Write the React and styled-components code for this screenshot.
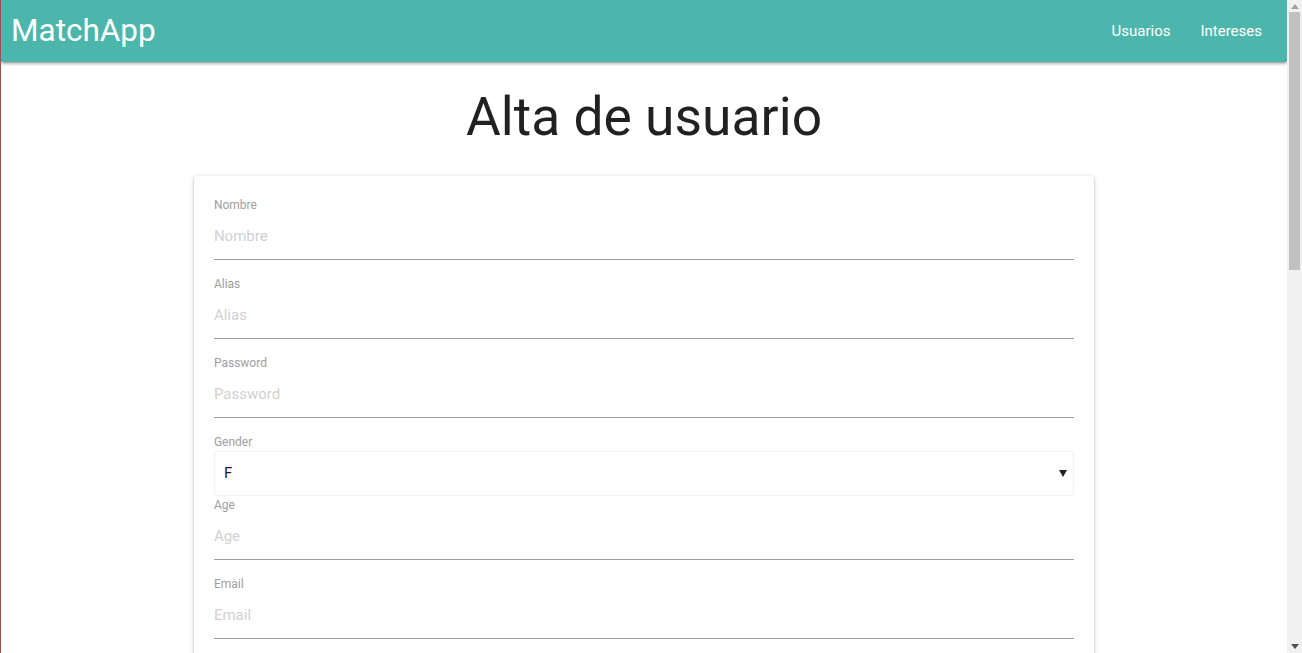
import React from "react";
import styled, { createGlobalStyle } from "styled-components";

const Global = createGlobalStyle`
  html { font-size: 15px; }
  html, body { margin: 0; height: 100%; overflow: hidden; }
  body {
    font-family: Roboto, "Noto Sans", Arial, sans-serif;
    color: rgba(0,0,0,0.87);
    background: #fff;
  }
  * { box-sizing: border-box; }
`;

const Frame = styled.div`
  display: flex;
  height: 100vh;
`;

const Content = styled.div`
  flex: 1;
  min-width: 0;
  overflow: hidden;
  border-left: 1px solid #9a5252;
`;

const ScrollBar = styled.div`
  width: 15px;
  flex: none;
  display: flex;
  flex-direction: column;
  background: #f1f1f1;
`;

const ScrollButton = styled.div`
  height: ${(p) => p.$h}px;
  flex: none;
  display: flex;
  justify-content: center;
  align-items: ${(p) => (p.$down ? "flex-start" : "flex-end")};
  padding-bottom: ${(p) => (p.$down ? 0 : 3)}px;
  padding-top: ${(p) => (p.$down ? 6 : 0)}px;
`;

const Track = styled.div`
  flex: 1;
  padding: 0 2px;
`;

const Thumb = styled.div`
  height: 258px;
  background: #c1c1c1;
`;

const Nav = styled.nav`
  height: 62px;
  background: #4db6ac;
  display: flex;
  align-items: center;
  justify-content: space-between;
  padding: 0 10px 0 10px;
  box-shadow: 0 2px 2px 0 rgba(0,0,0,.14), 0 3px 1px -2px rgba(0,0,0,.12), 0 1px 5px 0 rgba(0,0,0,.2);
  position: relative;
  z-index: 2;
`;

const Brand = styled.a`
  color: #fff;
  font-size: 31.5px;
  line-height: 62px;
  text-decoration: none;
`;

const Links = styled.ul`
  display: flex;
  list-style: none;
  margin: 0;
  padding: 0;
`;

const LinkItem = styled.li`
  a {
    display: block;
    padding: 0 15px;
    color: #fff;
    font-size: 15px;
    line-height: 58px;
    text-decoration: none;
  }
`;

const Main = styled.main`
  width: 70%;
  margin: 0 auto;
  padding-bottom: 40px;
`;

const Title = styled.h3`
  font-size: 53.4px;
  font-weight: 400;
  line-height: 58.7px;
  text-align: center;
  margin: 26px 0 29px;
  color: rgba(0,0,0,0.87);
`;

const Card = styled.form`
  background: #fff;
  border-radius: 2px;
  padding: 20px;
  box-shadow: 0 2px 2px 0 rgba(0,0,0,.14), 0 3px 1px -2px rgba(0,0,0,.12), 0 1px 5px 0 rgba(0,0,0,.2);
`;

const Field = styled.div`
  display: flex;
  flex-direction: column;
`;

const Label = styled.label`
  display: block;
  font-size: 12px;
  line-height: 16px;
  padding-top: 1px;
  height: 17px;
  color: #9e9e9e;
`;

const Input = styled.input`
  height: 47px;
  border: none;
  border-bottom: 1px solid #9e9e9e;
  margin: 0 0 15px;
  padding: 0;
  font-family: inherit;
  font-size: 15px;
  color: rgba(0,0,0,0.87);
  background: transparent;
  outline: none;
  &::placeholder { color: #d1d1d1; }
`;

const SelectWrap = styled.div`
  position: relative;
  margin-top: 1px;
`;

const Select = styled.select`
  appearance: none;
  width: 100%;
  height: 45px;
  border: 1px solid #f2f2f2;
  border-radius: 2px;
  padding: 0 0 0 9px;
  font-family: inherit;
  font-size: 15px;
  color: #15194f;
  background: #fff;
  outline: none;
`;

const Arrow = styled.svg`
  position: absolute;
  right: 7px;
  top: 19px;
  pointer-events: none;
`;

const Button = styled.button`
  margin-top: 10px;
  height: 36px;
  padding: 0 16px;
  border: none;
  border-radius: 2px;
  background: #26a69a;
  color: #fff;
  font-family: inherit;
  font-size: 14px;
  text-transform: uppercase;
`;

const fields = ["Nombre", "Alias", "Password"];
const fields2 = ["Age", "Email", "Descripción", "Ciudad", "Telefono", "Ocupación", "Intereses", "Edad mínima", "Edad máxima"];

export default function App() {
  return (
    <Frame>
      <Global />
      <Content>
        <Nav>
          <Brand href="#">MatchApp</Brand>
          <Links>
            <LinkItem><a href="#">Usuarios</a></LinkItem>
            <LinkItem><a href="#">Intereses</a></LinkItem>
          </Links>
        </Nav>
        <Main>
          <Title>Alta de usuario</Title>
          <Card onSubmit={(e) => e.preventDefault()}>
            {fields.map((f) => (
              <Field key={f}>
                <Label>{f}</Label>
                <Input type={f === "Password" ? "password" : "text"} placeholder={f} />
              </Field>
            ))}
            <Field>
              <Label>Gender</Label>
              <SelectWrap>
                <Select defaultValue="F">
                  <option value="F">F</option>
                  <option value="M">M</option>
                </Select>
                <Arrow width="8" height="7" viewBox="0 0 8 7">
                  <polygon points="0,0 8,0 4,7" fill="#222" />
                </Arrow>
              </SelectWrap>
            </Field>
            {fields2.map((f) => (
              <Field key={f}>
                <Label>{f}</Label>
                <Input type="text" placeholder={f} />
              </Field>
            ))}
            <Button type="submit">Guardar</Button>
          </Card>
        </Main>
      </Content>
      <ScrollBar aria-hidden="true">
        <ScrollButton $h={12}>
          <svg width="8" height="5" viewBox="0 0 8 5">
            <polygon points="0,5 8,5 4,0" fill="#a3a3a3" />
          </svg>
        </ScrollButton>
        <Track>
          <Thumb />
        </Track>
        <ScrollButton $h={15} $down>
          <svg width="8" height="5" viewBox="0 0 8 5">
            <polygon points="0,0 8,0 4,5" fill="#505050" />
          </svg>
        </ScrollButton>
      </ScrollBar>
    </Frame>
  );
}
